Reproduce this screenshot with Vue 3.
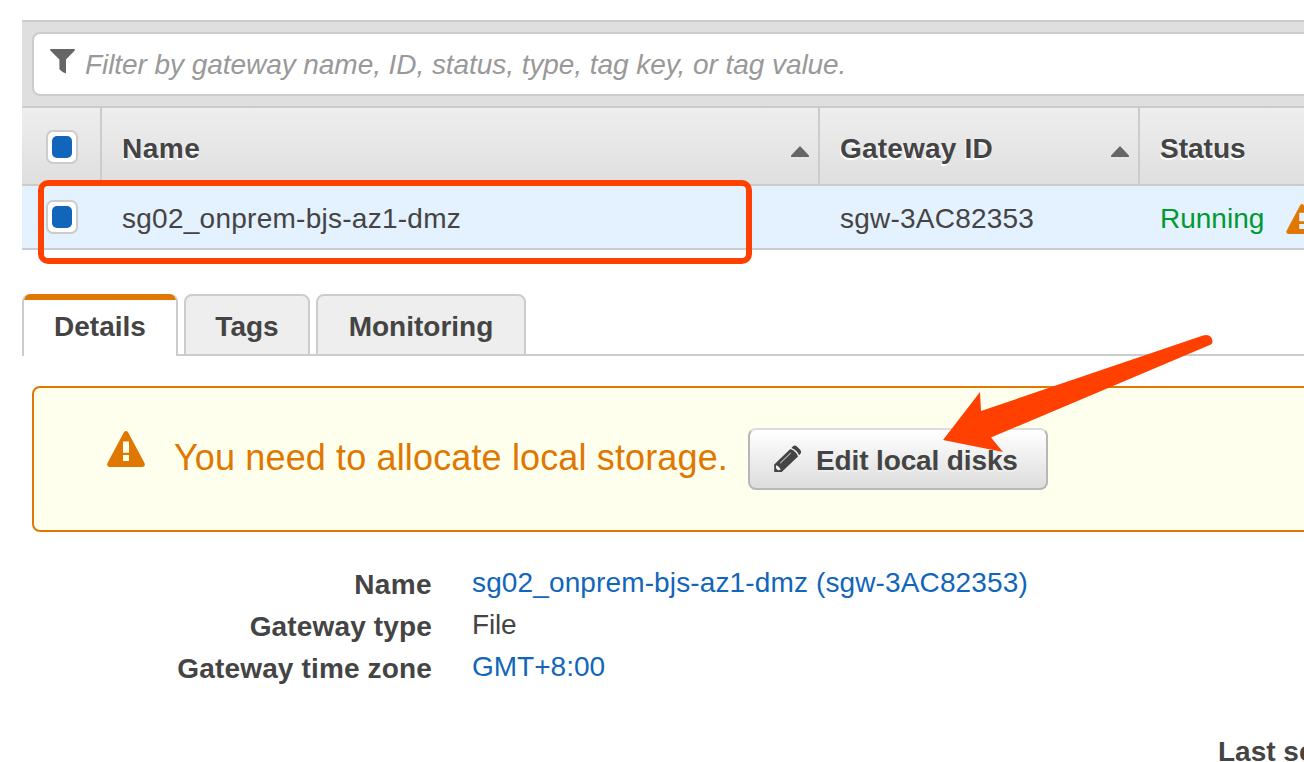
<script setup>
const columns = [
  { key: 'name', label: 'Name', sortable: true },
  { key: 'id', label: 'Gateway ID', sortable: true },
  { key: 'status', label: 'Status', sortable: false },
]
const tabs = ['Details', 'Tags', 'Monitoring']
const fields = [
  { key: 'f-name', label: 'Name', value: 'sg02_onprem-bjs-az1-dmz (sgw-3AC82353)', link: true },
  { key: 'f-type', label: 'Gateway type', value: 'File', link: false },
  { key: 'f-zone', label: 'Gateway time zone', value: 'GMT+8:00', link: true },
]
</script>

<template>
  <main class="page">
    <section class="gateways">
      <div class="filter">
        <div class="filter-box">
          <svg class="funnel" width="26" height="26" viewBox="0 0 26 26">
            <path d="M.8 0H24.3Q25.6 .4 24.5 1.8L16 10.5V24.5Q13 24 9.4 20.2V10.5L.6 1.8Q-.4 .5 .8 0Z" fill="#666" />
          </svg>
          <span class="placeholder">Filter by gateway name, ID, status, type, tag key, or tag value.</span>
        </div>
      </div>
      <div class="grid head">
        <div class="cell pick"><span class="check"></span></div>
        <div v-for="c in columns" :key="c.key" class="cell">
          <span class="text" :class="'h-' + c.key">{{ c.label }}</span>
          <svg v-if="c.sortable" class="sort" width="18" height="11" viewBox="0 0 18 11">
            <path d="M9 0L18 9.5V11H0V9.5Z" fill="#666" />
          </svg>
        </div>
      </div>
      <div class="grid row">
        <div class="cell pick"><span class="check"></span></div>
        <div class="cell"><span class="text r-name">sg02_onprem-bjs-az1-dmz</span></div>
        <div class="cell"><span class="text r-id">sgw-3AC82353</span></div>
        <div class="cell">
          <span class="text running">Running</span>
          <svg class="warn-small" width="32" height="30" viewBox="0 0 38 36">
            <path d="M16.8 1.4Q19-1.2 21.2 1.4L37.5 32Q38.8 35.5 35.5 36H2.5Q-.8 35.5.5 32Z" fill="#e07700" />
            <path d="M15.7 10.5h6.6v10.3h-6.6zM15.7 24h6.6v6h-6.6z" fill="#e4f1fe" />
          </svg>
        </div>
      </div>
    </section>

    <nav class="tabs">
      <div v-for="(t, i) in tabs" :key="t" class="tab" :class="['t-' + t.toLowerCase(), { active: i === 0 }]"><span>{{ t }}</span></div>
    </nav>

    <section class="alert">
      <svg class="warn" width="38" height="36" viewBox="0 0 38 36">
        <path d="M16.8 1.4Q19-1.2 21.2 1.4L37.5 32Q38.8 35.5 35.5 36H2.5Q-.8 35.5.5 32Z" fill="#e07700" />
        <path d="M16 10.5h6v11.3h-6zM16 24h6v6h-6z" fill="#ffe" />
      </svg>
      <span class="message">You need to allocate local storage.</span>
      <button class="edit" type="button">
        <svg class="pencil" width="28" height="28" viewBox="0 0 28 28">
          <path d="M18.7 1.6Q20.5-.3 22.6 1.2L26.2 4.8Q27.9 7 26.4 8.8L25 10.2Q23.4 5.1 17.4 2.9Z" fill="#444" />
          <path d="M16.3 4L.2 19.5V27H7.7L24 11.4Q22.3 6.1 16.3 4Z" fill="#444" />
          <path d="M2 20.3Q5.8 21.2 6.5 25L4 25.3L1.9 23.3Z" fill="#eee" />
          <path d="M6.2 18.2L16.8 7.9" stroke="#eee" stroke-width="1" />
        </svg>
        <span class="edit-text">Edit local disks</span>
      </button>
    </section>

    <dl class="fields">
      <template v-for="f in fields" :key="f.key">
        <dt><span :class="f.key">{{ f.label }}</span></dt>
        <dd :class="{ link: f.link }"><span :class="f.key">{{ f.value }}</span></dd>
      </template>
    </dl>
    <div class="last">Last se</div>

    <div class="highlight"></div>
    <svg class="arrow" width="272" height="120" viewBox="942 333 272 120">
      <path d="M943 440L980 392L981 411L1203 335.5Q1208 334 1211 337Q1214 342 1211 344.5L991 437.5L1003 452Z" fill="#ff4000" />
    </svg>
  </main>
</template>

<style>
body { margin: 0; background: #fff; }
</style>

<style scoped>
.page { position: relative; width: 1304px; height: 762px; overflow: hidden; box-sizing: border-box; padding-top: 20px; background: #fff; color: #444; font: 28px/32px "Liberation Sans", Arial, sans-serif; white-space: nowrap; }
.page * { box-sizing: border-box; }
.gateways { margin-left: 22px; }
.filter { height: 86px; padding: 10px 0 0 10px; border-top: 2px solid #ccc; background: #dfdfdf; }
.filter-box { display: flex; align-items: flex-start; height: 64px; width: 1300px; border: 2px solid #ccc; border-radius: 8px; background: #fff; padding: 15px 0 0 16px; }
.funnel { flex: none; }
.placeholder { margin: 0 0 0 9px; color: #999; font-style: italic; letter-spacing: -.06px; }
.grid { display: grid; grid-template-columns: 80px 718px 320px 164px; }
.head { height: 80px; border-top: 2px solid #ccc; border-bottom: 2px solid #ccc; background: linear-gradient(#eee, #dfdfdf); font-weight: 700; text-shadow: -1px 2px 0 #fff; }
.row { height: 64px; border-bottom: 2px solid #ccc; background: #e4f1fe; }
.cell { display: flex; align-items: center; padding-left: 20px; }
.head .cell:not(:last-child) { border-right: 2px solid #ccc; }
.head .cell { padding-right: 9px; }
.head .text { padding-top: 5px; }
.row .text { padding-top: 3px; }
.head .sort { margin: 11px 0 0 auto; }
.head .cell.pick, .row .cell.pick { padding: 0 0 0 24px; }
.check { width: 32px; height: 34px; border: 2px solid #ccc; border-radius: 7px; background: #fff; padding: 4px; }
.check::before { content: ""; display: block; width: 20px; height: 22px; border-radius: 5px; background: #1166bb; }
.head .check { margin-top: 2px; }
.h-name { letter-spacing: .5px; }
.h-id { letter-spacing: .2px; }
.r-name { letter-spacing: .26px; }
.r-id { letter-spacing: .22px; }
.running { color: #093; }
.warn-small { flex: none; margin-left: 22px; margin-top: 4px; }
.tabs { display: flex; gap: 6px; margin: 44px 0 0 22px; height: 62px; position: relative; }
.tabs::after { content: ""; position: absolute; left: 156px; right: 0; bottom: 0; height: 2px; background: #ccc; }
.tab { height: 62px; border: 2px solid #ccc; border-radius: 8px 8px 0 0; background: #eee; padding: 15px 0 0; text-align: center; font-weight: 700; }
.t-details { width: 156px; }
.t-tags { width: 126px; }
.t-monitoring { width: 210px; }
.tab.active { position: relative; background: #fff; border-top: 0; border-bottom: 0; padding-top: 17px; overflow: hidden; }
.tab.active::before { content: ""; position: absolute; left: 0; right: 0; top: 0; height: 6px; background: #e07700; border-radius: 5px 5px 0 0; }
.alert { display: flex; align-items: center; height: 146px; width: 1320px; margin: 30px 0 0 32px; border: 2px solid #e07700; border-radius: 8px; background: #ffe; padding-left: 73px; }
.warn { margin-top: -20px; flex: none; }
.message { margin: -2px 0 0 29px; width: 552px; color: #e07700; font-size: 36px; line-height: 40px; letter-spacing: .14px; }
.edit { display: flex; align-items: center; width: 300px; height: 62px; margin-left: 22px; padding: 0 0 0 24px; border: 2px solid #b7b7b7; border-top-color: #ddd; border-radius: 8px; background: linear-gradient(#fff, #ddd); font: 700 28px/32px "Liberation Sans", Arial, sans-serif; color: #444; text-shadow: 0 2px 0 #eee; }
.edit-text { margin-left: 14px; margin-top: 3px; letter-spacing: -.13px; }
.fields { display: grid; grid-template-columns: 410px 700px; column-gap: 40px; grid-auto-rows: 42px; margin: 35px 0 0 22px; }
dt { text-align: right; font-weight: 700; padding-top: 2px; }
dt .f-name { letter-spacing: .4px; }
dt .f-type, dt .f-zone { letter-spacing: .15px; }
dd { margin: 0; }
dd .f-name { letter-spacing: .13px; }
dd .f-type { letter-spacing: -.2px; }
.link { color: #1166bb; }
.last { margin: 43px 0 0 1218px; font-weight: 700; }
.highlight { position: absolute; left: 38px; top: 180px; width: 714px; height: 84px; border: 6px solid #ff4000; border-radius: 10px; }
.arrow { position: absolute; left: 942px; top: 333px; }
</style>
